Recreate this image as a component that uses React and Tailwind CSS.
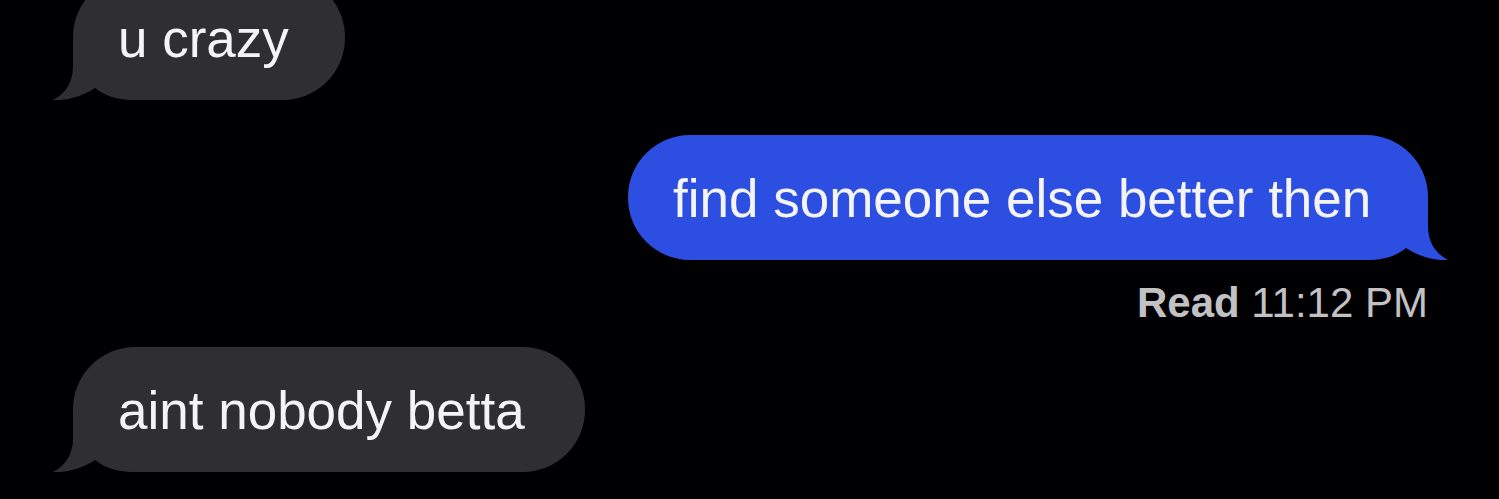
import React from "react";

function Tail({ color, side }) {
  const isLeft = side === "left";
  return (
    <svg
      className={
        isLeft
          ? "absolute bottom-0 left-[-20px] h-[60px] w-[90px]"
          : "absolute bottom-0 right-[-20px] h-[60px] w-[90px] -scale-x-100"
      }
      viewBox="0 0 90 60"
    >
      <path
        d="M20 0 L20 26 C20 42 13 53 0 60 C14 61 30 56 42 48 C52 56 64 60 82 60 L90 60 L90 0 Z"
        fill={color}
      />
    </svg>
  );
}

function Bubble({ text, side, width, className }) {
  const isLeft = side === "left";
  const color = isLeft ? "#2f2f31" : "#2c4fe2";
  return (
    <div
      className={
        "relative flex h-[125px] items-center rounded-[62px] pl-[45px] pt-[2px] " +
        (isLeft ? "bg-[#2f2f31] " : "bg-[#2c4fe2] ") +
        className
      }
      style={{ width }}
    >
      <Tail color={color} side={side} />
      <span className="relative whitespace-nowrap text-[53px] leading-[53px] text-[#f4f4f6] [font-family:'Liberation_Sans',Arial,sans-serif]">
        {text}
      </span>
    </div>
  );
}

export default function App() {
  return (
    <div className="flex h-[499px] w-full flex-col overflow-hidden bg-[#000003]">
      <Bubble text="u crazy" side="left" width={272} className="ml-[73px] mt-[-25px] self-start" />
      <Bubble
        text="find someone else better then"
        side="right"
        width={800}
        className="mr-[71px] mt-[35px] self-end"
      />
      <div className="mr-[71px] mt-[19px] self-end whitespace-nowrap text-[42px] leading-[48px] text-[#c2c2c4] [font-family:'Liberation_Sans',Arial,sans-serif]">
        <span className="font-bold">Read</span> 11:12 PM
      </div>
      <Bubble
        text="aint nobody betta"
        side="left"
        width={512}
        className="ml-[73px] mt-[20px] self-start"
      />
    </div>
  );
}
